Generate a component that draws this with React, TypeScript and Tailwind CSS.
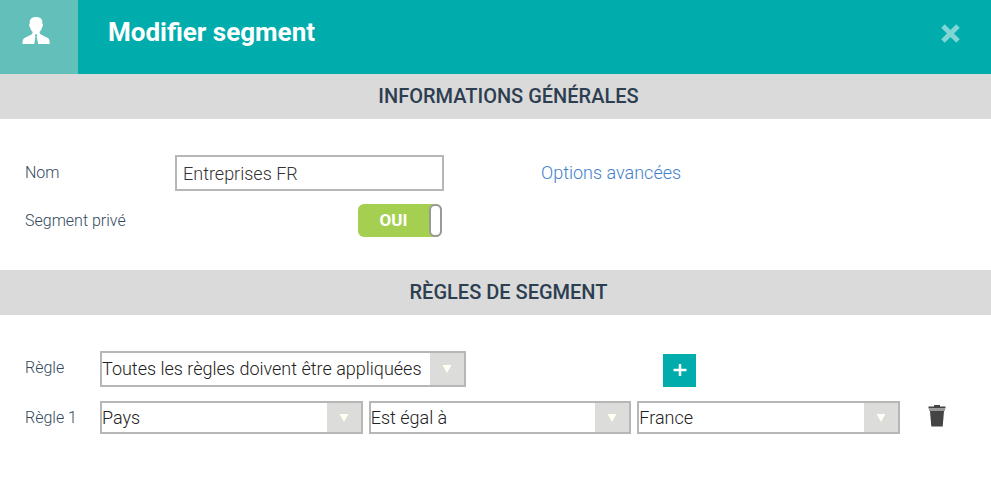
import { useState } from "react";
import type { ReactNode } from "react";
import clsx from "clsx";

interface SelectFieldProps {
  id: string;
  label?: string;
  options: string[];
  className?: string;
}

const SelectField = ({ id, label, options, className }: SelectFieldProps) => {
  return (
    <div className={clsx("relative border-2 border-[#b7b7b7] bg-white", className)}>
      <select
        id={id}
        aria-label={label}
        className="block h-full w-full appearance-none bg-transparent pr-8 text-lg text-[#222222] outline-none"
      >
        {options.map((option) => (
          <option key={option}>{option}</option>
        ))}
      </select>
      <span className="pointer-events-none absolute inset-y-0 right-0 flex w-[34px] items-center justify-center bg-[#dcdcda]">
        <svg viewBox="0 0 10 8" className="h-2 w-2.5" fill="#fffff4">
          <path d="M0.5 0h9L5 8z" />
        </svg>
      </span>
    </div>
  );
};

const SectionTitle = ({ children }: { children: ReactNode }) => {
  return (
    <h2 className="bg-[#dadada] pl-[26px] text-center text-xl leading-[45px] font-medium text-[#2c3e50] uppercase">
      {children}
    </h2>
  );
};

const App = () => {
  const [name, setName] = useState("Entreprises FR");
  const [isPrivate, setIsPrivate] = useState(true);

  return (
    <div className="min-h-screen bg-white font-['Roboto','Liberation_Sans',sans-serif] text-base font-light text-[#34495e]">
      <header className="flex h-[74px] bg-[#00acac] text-white">
        <div className="flex w-[78px] justify-center bg-[#62bfba] pt-4 pr-1.5">
          <svg viewBox="0 0 28 28" className="h-7 w-7" fill="currentColor">
            <path d="M14 1c4.400 0 6.400 2.200 6.400 5.500v1.600c.8.3.9 2.400-.3 2.900-.4 2.400-1.500 3.900-2.500 4.700v1.400l1.200 1.300 7 3.700c1.500.8 1.900 2.400 1.900 6.200H16.200l-1.500-7.800.6-1.200-.7-1h-1l-.7 1 .6 1.200-1.300 7.800H.5c0-3.800.5-5.400 2-6.200l7-3.700 1.100-1.300v-1.400C9.600 14.900 8.400 13.400 8 11c-1.200-.5-1.100-2.600-.3-2.900V6.500C7.700 3.200 9.700 1 14 1z" />
          </svg>
        </div>
        <h1 className="flex-1 pt-3 pl-[30px] text-[26px] leading-10 font-bold">Modifier segment</h1>
        <button type="button" aria-label="Fermer" className="mt-6 mr-[31px] h-[19px] w-[19px] text-[#80d5d5]">
          <svg viewBox="0 0 19 19" fill="none" stroke="currentColor" strokeWidth="5">
            <path d="M2 2l15 15M17 2L2 17" />
          </svg>
        </button>
      </header>

      <SectionTitle>Informations générales</SectionTitle>
      <section className="px-[25px] pt-9 pb-[33px]">
        <div className="flex h-9 items-center">
          <label htmlFor="segment-name" className="w-[150px]">
            Nom
          </label>
          <input
            id="segment-name"
            type="text"
            value={name}
            onChange={(e) => setName(e.target.value)}
            className="h-9 w-[269px] border-2 border-[#b7b7b7] px-1.5 text-lg text-[#333333] outline-none"
          />
          <a href="#options" className="ml-[97px] text-lg font-light text-[#4380cc]">
            Options avancées
          </a>
        </div>
        <div className="mt-[13px] flex h-[33px] w-[417px] items-center justify-between">
          <span id="private-label">Segment privé</span>
          <button
            type="button"
            role="switch"
            aria-checked={isPrivate}
            aria-labelledby="private-label"
            onClick={() => setIsPrivate(!isPrivate)}
            className={clsx(
              "flex h-[33px] w-[84px] items-center rounded-md text-[17px] font-bold text-white",
              isPrivate ? "bg-[#a5cf51]" : "flex-row-reverse bg-[#b7b7b7]"
            )}
          >
            <span className="flex-1">{isPrivate ? "OUI" : "NON"}</span>
            <span className="h-full w-[13px] rounded-md border-2 border-[#999999] bg-white" />
          </button>
        </div>
      </section>

      <SectionTitle>Règles de segment</SectionTitle>
      <section className="px-[25px] pt-9">
        <div className="flex items-center">
          <label htmlFor="rule-mode" className="w-[75px] pb-0.5">
            Règle
          </label>
          <SelectField
            id="rule-mode"
            options={["Toutes les règles doivent être appliquées", "Au moins une règle doit être appliquée"]}
            className="h-9 w-[366px]"
          />
          <button
            type="button"
            aria-label="Ajouter une règle"
            className="ml-[197px] flex h-[33px] w-[33px] items-center justify-center self-end bg-[#00acac] pb-0.5 text-white"
          >
            <svg viewBox="0 0 14 14" className="h-3.5 w-3.5" stroke="currentColor" strokeWidth="2.5">
              <path d="M7 1v12M0.500 7h13" />
            </svg>
          </button>
        </div>
        <div className="mt-3.5 flex items-center">
          <label htmlFor="rule-field" className="w-[75px]">
            Règle 1
          </label>
          <div className="flex flex-1 gap-1.5">
            <SelectField id="rule-field" options={["Pays", "Ville"]} className="h-[33px] flex-1" />
            <SelectField
              id="rule-operator"
              label="Opérateur"
              options={["Est égal à", "Est différent de"]}
              className="h-[33px] flex-1"
            />
            <SelectField id="rule-value" label="Valeur" options={["France", "Belgique"]} className="h-[33px] flex-1" />
          </div>
          <button type="button" aria-label="Supprimer la règle" className="mr-5 mb-1 ml-7 text-[#444444]">
            <svg viewBox="0 0 18 22" className="h-[22px] w-[18px]" fill="currentColor">
              <path d="M6 0h6v1.500h5.500v2h-17v-2H6z" />
              <path d="M1 3.500h16v2.500H1z" fill="#999999" />
              <path d="M2 6h14l-1.300 15.500H3.300z" />
            </svg>
          </button>
        </div>
      </section>
    </div>
  );
};

export default App;
